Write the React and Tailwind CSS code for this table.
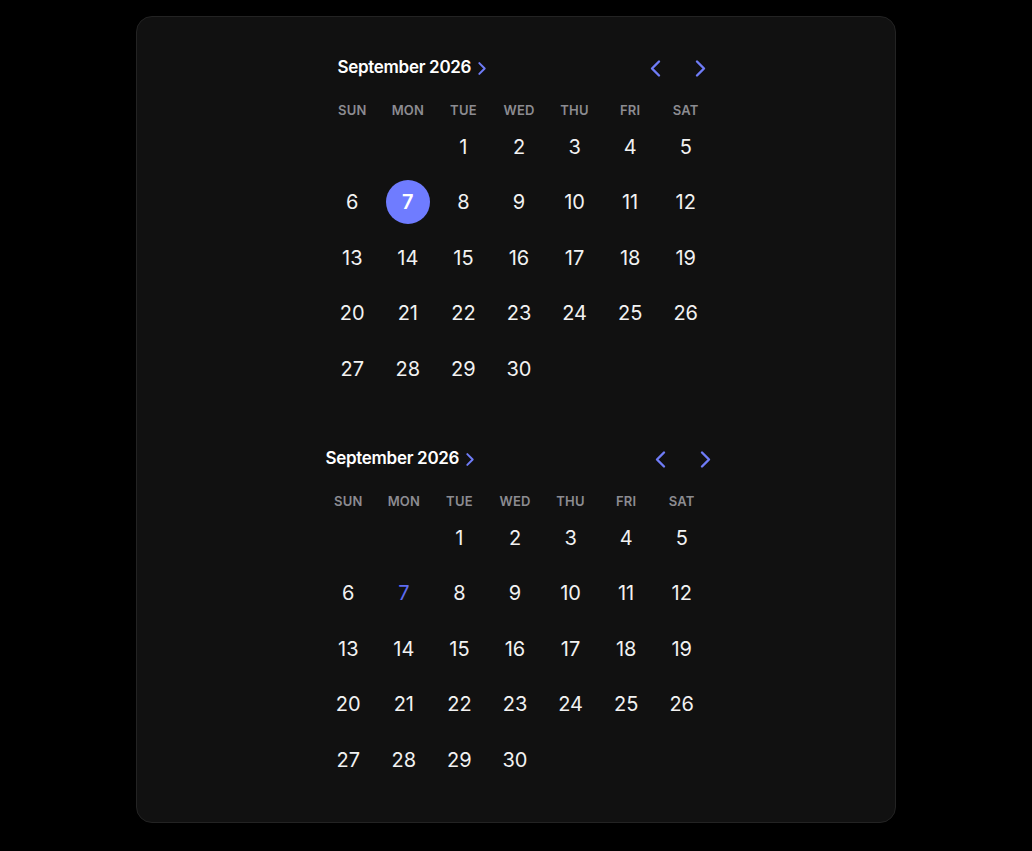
import React from 'react';

const DAYS = ['SUN', 'MON', 'TUE', 'WED', 'THU', 'FRI', 'SAT'];

// September 2026 starts on a Tuesday
const cells = [null, null, ...Array.from({ length: 30 }, (_, i) => i + 1)];

function Chevron({ dir = 'right', className = '', width = 2.4 }) {
  const d = dir === 'right' ? 'M3 2l7 7-7 7' : 'M10 2L3 9l7 7';
  return (
    <svg viewBox="0 0 13 18" className={className} fill="none" stroke="currentColor" strokeWidth={width} strokeLinecap="round" strokeLinejoin="round">
      <path d={d} />
    </svg>
  );
}

function Calendar({ variant }) {
  const first = variant === 'filled';
  return (
    <div className={first ? 'w-[389px] ml-[187.5px]' : 'w-[389px] ml-[183.5px]'}>
      {/* header */}
      <div className="h-[44px] flex items-center">
        <div className={`flex items-center gap-[6px] ${first ? 'ml-[13px]' : 'ml-[5px]'}`}>
          <span className="text-[17px] font-semibold text-white tracking-[-0.3px]">September 2026</span>
          <Chevron className="w-[10px] h-[15px] text-[#6f7cf7]" width={2.6} />
        </div>
        <div className={`ml-auto flex items-center gap-[32px] ${first ? 'mr-[7px]' : 'mr-[-2px]'}`}>
          <Chevron dir="left" className="w-[13px] h-[19px] text-[#6f7cf7]" />
          <Chevron className="w-[13px] h-[19px] text-[#6f7cf7]" />
        </div>
      </div>

      {/* weekdays */}
      <div className="grid grid-cols-7 mt-[11px] h-[18px] items-center">
        {DAYS.map(d => (
          <div key={d} className="text-center text-[13px] font-semibold text-[#8c8c91] tracking-[0.2px]">{d}</div>
        ))}
      </div>

      {/* days */}
      <div className="grid grid-cols-7">
        {cells.map((n, i) => (
          <div key={i} className="h-[55.5px] flex items-center justify-center">
            {n === 7 && first ? (
              <div className="w-[44px] h-[44px] rounded-full bg-[#6f7cff] flex items-center justify-center text-[20px] font-semibold text-white">7</div>
            ) : n === 7 ? (
              <span className="text-[20px] text-[#5e6cf0]">7</span>
            ) : (
              <span className="text-[20px] text-[#f2f2f2]">{n}</span>
            )}
          </div>
        ))}
      </div>
    </div>
  );
}

export default function App() {
  return (
    <div className="min-h-screen bg-black pt-[16px]" style={{ fontFamily: 'Inter, "Noto Sans", sans-serif' }}>
      <div className="w-[760px] h-[807px] mx-auto bg-[#111111] border border-[#232323] rounded-[16px] pt-[29px]">
        <Calendar variant="filled" />
        <div className="h-[40.5px]" />
        <Calendar variant="plain" />
      </div>
    </div>
  );
}
